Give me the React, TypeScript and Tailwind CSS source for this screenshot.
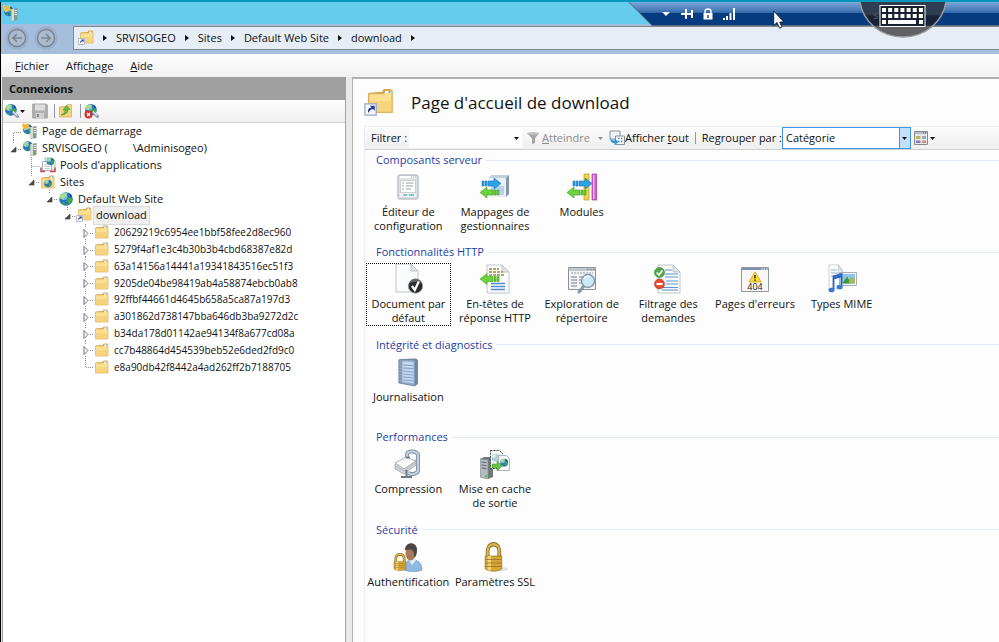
import React from "react";

type IconProps = { className?: string };

/* ---------- small shared drawings ---------- */

function FolderShape() {
  return (
    <>
      <path d="M2 3.500 8.500 3l1-1.500h4l.5 1.500v11H2z" fill="#d9a94e" />
      <path d="M1.500 4h8l1-1.500H14V14H1.500z" fill="#fbdf93" stroke="#d8ae56" strokeWidth=".7" />
      <path d="M1.500 8H14v6H1.500z" fill="#f4cc70" opacity=".6" />
      <path d="M10.500 2.600h2.600v1.200h-2.600z" fill="#fff" />
      <path d="M12 2.600h1v1.200h-1z" fill="#6fb0dc" />
    </>
  );
}

function FolderIcon({ className = "size-4" }: IconProps) {
  return (
    <svg viewBox="0 0 16 16" className={className} aria-hidden="true">
      <FolderShape />
    </svg>
  );
}

function ShortcutFolderIcon({ className = "size-4" }: IconProps) {
  return (
    <svg viewBox="0 0 16 16" className={className} aria-hidden="true">
      <g transform="translate(1 -1)">
        <FolderShape />
      </g>
      <path d="M.5 8.500h6v6h-6z" fill="#f6f8fd" stroke="#9aa7c8" strokeWidth=".7" />
      <path d="M2.200 13.300c-.3-2 .5-2.800 1.800-2.900l-.9-1h2.600v2.700l-.9-.9c-1 .1-1.600.6-2.600 2.100z" fill="#22389c" />
    </svg>
  );
}

function GlobeShape() {
  return (
    <>
      <circle cx="8" cy="8" r="6.800" fill="#2672c8" />
      <circle cx="6" cy="5.500" r="3.600" fill="#8ccaf4" opacity=".75" />
      <path d="M3 3.500c2-2 5-2.200 6.500-1L8 4l1 1.500-2.500 1L5.500 9 3.500 7.500 1.800 8C1.600 6 2 4.600 3 3.500z" fill="#a6dc8a" />
      <path d="M9 7.500l3-1 2.500 1.500c-.2 2.500-1.500 4.500-3.500 5.800L9.500 11z" fill="#3fae3b" />
      <path d="M4.500 11l2 .5.5 2.800c-1.500-.3-2.700-1.500-3.500-2.600z" fill="#3fae3b" />
      <path d="M11 2.200c1.800.9 2.900 2.300 3.300 4L12 5z" fill="#1b3f93" />
    </>
  );
}

function GlobeIcon({ className = "size-4" }: IconProps) {
  return (
    <svg viewBox="0 0 16 16" className={className} aria-hidden="true">
      <GlobeShape />
    </svg>
  );
}

function ServerGlobeIcon({ className = "size-4", star = false }: IconProps & { star?: boolean }) {
  return (
    <svg viewBox="0 0 16 16" className={className} aria-hidden="true">
      <g transform="translate(0 .5) scale(.72)">
        <GlobeShape />
      </g>
      {star && (
        <path d="M1 0l2.500 1.500L7 .3 6 3l3 2.500L5 5 2 7.500 1.800 4.500 0 3z" fill="#f6b632" stroke="#fbe08a" strokeWidth=".4" />
      )}
      <path d="M8.500 4 14.500 3v12l-6 1z" fill="#8d9690" />
      <path d="M8.500 4 11 3.500v12l-2.500.3z" fill="#d9dedb" />
      <path d="M11.500 5.500h2.500M11.500 7.500h2.500M11.500 9.500h2.500" stroke="#e9efec" />
      <path d="M12 12.500h1.500" stroke="#53c545" strokeWidth="1.500" />
    </svg>
  );
}

function PoolsIcon() {
  return (
    <svg viewBox="0 0 16 16" className="size-4" aria-hidden="true">
      <path d="M5 1h7l3 3v9H5z" fill="#eef2f8" stroke="#97a6bd" strokeWidth=".8" />
      <path d="M2.500 4.500h9v9h-9z" fill="#fff" stroke="#8e9db5" strokeWidth=".8" />
      <g transform="translate(6 0) scale(.55)">
        <GlobeShape />
      </g>
      <path d="M4.500 7.500h5M4.500 9.500h5M4.500 11.500h5" stroke="#a9b9d0" strokeWidth=".8" />
      <path d="M1 10.500v4h4M15 10.500v4h-5" fill="none" stroke="#c94848" strokeWidth="1.500" />
    </svg>
  );
}

function SitesIcon() {
  return (
    <svg viewBox="0 0 16 16" className="size-4" aria-hidden="true">
      <FolderShape />
      <g transform="translate(3.500 5) scale(.56)">
        <GlobeShape />
      </g>
    </svg>
  );
}

function Caret({ className = "" }: IconProps) {
  return (
    <svg viewBox="0 0 5 3" className={`h-[3px] w-[5px] shrink-0 ${className}`} aria-hidden="true">
      <path d="M0 0h5L2.500 3z" fill="currentColor" />
    </svg>
  );
}

/* ---------- toolbar drawings ---------- */

function ConnectIcon({ remove = false }: { remove?: boolean }) {
  return (
    <svg viewBox="0 0 16 16" className="size-4" aria-hidden="true">
      <g transform="scale(.86)">
        <GlobeShape />
      </g>
      <path d="M9.500 9.500l4 4" stroke="#8b99a8" strokeWidth="3" strokeLinecap="round" />
      <path d="M9 8.500l4 4" stroke="#e3ebf2" strokeWidth="1.200" />
      {remove && (
        <>
          <circle cx="4.500" cy="11.500" r="4" fill="#d02f2a" />
          <path d="M3 10l3 3M6 10l-3 3" stroke="#fff" strokeWidth="1.300" />
        </>
      )}
    </svg>
  );
}

function SaveIcon() {
  return (
    <svg viewBox="0 0 16 16" className="size-4" aria-hidden="true">
      <path d="M.7 1h13.600l1 1v13H.7z" fill="#b0b0b0" stroke="#969696" strokeWidth=".8" />
      <path d="M3 1.500h10v6H3z" fill="#dedede" />
      <path d="M4 10h8v5H4z" fill="#d2d2d2" />
      <path d="M5 11h2v3H5z" fill="#858585" />
    </svg>
  );
}

function UpFolderIcon() {
  return (
    <svg viewBox="0 0 16 16" className="size-4" aria-hidden="true">
      <path d="M1.500 4l7-.5 1-2h4V14h-12z" fill="#f3d27c" stroke="#d1a951" strokeWidth=".7" />
      <path d="M3 12c3-1 4-3 4-5H5l3.500-4.500L12 6.500h-2c0 3-2.500 5.500-7 5.500z" fill="#5dbd3d" stroke="#378a25" strokeWidth=".5" />
    </svg>
  );
}

function FunnelIcon() {
  return (
    <svg viewBox="0 0 14 14" className="size-3.5" aria-hidden="true">
      <path d="M1 2h12L9 7.500V12l-3 1V7.500z" fill="#a4a4a4" />
      <ellipse cx="7" cy="2.500" rx="6" ry="1.500" fill="#bfbfbf" />
    </svg>
  );
}

function ShowAllIcon() {
  return (
    <svg viewBox="0 0 16 16" className="size-4" aria-hidden="true">
      <path d="M1 1h10v8H1z" fill="#eef3f8" stroke="#7d8792" strokeWidth=".9" />
      <path d="M6.500 6h9v8.500h-9z" fill="#f7f9fc" stroke="#7d8792" strokeWidth=".9" />
      <path d="M9 8.500h1.500m1.500 0h1.500M9 11.500h1.500m1.500 0h1.500" stroke="#6484b4" strokeWidth="1.500" />
      <path d="M1.500 8c1 2 2 2.500 4 2.500V8.500L9.500 12l-4 3.200V13c-3 0-4.500-2-4-5z" fill="#2d95d8" />
    </svg>
  );
}

function ViewIcon() {
  return (
    <svg viewBox="0 0 14 14" className="size-3.5" aria-hidden="true">
      <path d="M.5.5h13v13H.5z" fill="#e9e9e9" stroke="#8a8a8a" />
      <path d="M1 2h12" stroke="#b7bcc6" strokeWidth="2" />
      <path d="M9 2h1m1 0h1" stroke="#555" />
      <path d="M2 5h4.500v3H2z" fill="#c7b25a" />
      <path d="M8 5h4v3H8z" fill="#8aa9cf" />
      <path d="M2 9.500h4.500V12H2z" fill="#8377c9" />
      <path d="M8 9.500h4V12H8z" fill="#d88f70" />
    </svg>
  );
}

/* ---------- feature drawings, 30 x 30 grid ---------- */

function Feature({ children }: { children: React.ReactNode }) {
  return (
    <svg viewBox="0 0 30 30" className="size-[30px]" aria-hidden="true">
      {children}
    </svg>
  );
}

const BLUE_ARROW = "M0 3h2v5H0zM3 3h2v5H3zM6 3h6V0l7 5.500-7 5.500V8H6z";
const GREEN_ARROW = "M19 3h-2v5h2zM16 3h-2v5h2zM13 3H7V0L0 5.500 7 11V8h6z";

function ConfigEditor() {
  return (
    <Feature>
      <rect x="5" y="3" width="20" height="24" rx="1.500" fill="#dfe3e6" stroke="#a4abb1" />
      <path d="M7 5h16" stroke="#fff" strokeWidth="2" />
      <path d="M18 5h1m1 0h1m1 0h1" stroke="#8e979e" />
      <path d="M7.500 8.500h15v12h-15z" fill="#fff" stroke="#bbc1c5" strokeWidth=".7" />
      <path d="M9 11h2m2 0h7M9 14h2m2 0h7M9 17h2m2 0h5" stroke="#98a1a7" />
      <path d="M7.500 21.500h15v3h-15z" fill="#fff" />
      <path d="M10 23h4m2 0h5" stroke="#45b1dd" strokeWidth="1.500" />
    </Feature>
  );
}

function HandlerMappings() {
  return (
    <Feature>
      <path d="M9 6l3-3h17v19l-3 3H9z" fill="#8597ad" />
      <path d="M9 6h17v19H9z" fill="#e9f0f8" />
      <path d="M9 6l3-3h17l-3 3z" fill="#c3cfde" />
      <path d="M11 14h13v9H11z" fill="#b9d0ea" />
      <path d={BLUE_ARROW} transform="translate(2 6)" fill="#2ea3e4" stroke="#1773b8" strokeWidth=".6" />
      <path d={GREEN_ARROW} transform="translate(0 15)" fill="#6fd13d" stroke="#3e9e21" strokeWidth=".6" />
    </Feature>
  );
}

function ModulesIcon() {
  return (
    <Feature>
      <path d="M17 2h5v26h-5z" fill="#f0d445" stroke="#b59a27" strokeWidth=".7" />
      <path d="M25 2h5v26h-5z" fill="#cb63cd" stroke="#9b3ba0" strokeWidth=".7" />
      <path d="M26 3h1.500v24H26z" fill="#eda8ea" />
      <path d={BLUE_ARROW} transform="translate(6 6)" fill="#2ea3e4" stroke="#1773b8" strokeWidth=".6" />
      <path d={GREEN_ARROW} transform="translate(0 15)" fill="#6fd13d" stroke="#3e9e21" strokeWidth=".6" />
    </Feature>
  );
}

function Sheet({ x = 4, y = 1 }: { x?: number; y?: number }) {
  return (
    <g transform={`translate(${x} ${y})`}>
      <path d="M0 0h15l7 7v21H0z" fill="#fafbfc" stroke="#b9bec4" strokeWidth=".9" />
      <path d="M15 0v7h7z" fill="#dfe3e7" stroke="#b9bec4" strokeWidth=".9" />
    </g>
  );
}

function DefaultDocument() {
  return (
    <Feature>
      <Sheet x={3} y={0} />
      <circle cx="22.500" cy="22" r="7.200" fill="#2b2b2b" stroke="#999" strokeWidth=".7" />
      <path d="M16.500 19a6.500 6.500 0 0 1 12 0c-4-1.500-8-1-12 0z" fill="#777" opacity=".7" />
      <path d="M19 22l2.800 4 4-8.500" fill="none" stroke="#fff" strokeWidth="2.200" />
    </Feature>
  );
}

function HttpHeaders() {
  return (
    <Feature>
      <Sheet x={7} y={1} />
      <path d="M9 5h10M9 8h14M9 11h16" stroke="#a28a35" strokeWidth="1.600" strokeDasharray="3 1" />
      <path d={GREEN_ARROW} transform="translate(0 9.500)" fill="#6fd13d" stroke="#3e9e21" strokeWidth=".6" />
      <path d="M11 19.500h14M11 22.500h14M11 25.500h14" stroke="#4f8bd0" strokeWidth="1.300" />
    </Feature>
  );
}

function DirectoryBrowsing() {
  return (
    <Feature>
      <path d="M1.500 3.500h27v22h-27z" fill="#f3f4f5" stroke="#8b9196" />
      <path d="M2 4h26v3H2z" fill="#c1c6cb" />
      <path d="M20 5.500h1.500m1.500 0h1.500m1.500 0h1.500" stroke="#777" />
      <path d="M4 9h22" stroke="#999" strokeDasharray="2 1" />
      <path d="M4 13h6m2 0h6M4 16h6m2 0h6M4 19h6m2 0h4M4 22h6" stroke="#787e84" strokeWidth="1.200" />
      <path d="M17 22l-5 6" stroke="#8997a6" strokeWidth="3" strokeLinecap="round" />
      <circle cx="21" cy="17" r="6.500" fill="#cce7f8" stroke="#8797a7" strokeWidth="1.400" />
      <path d="M17 15a5 5 0 0 1 6-2.500" stroke="#fff" strokeWidth="1.500" fill="none" />
    </Feature>
  );
}

function RequestFiltering() {
  return (
    <Feature>
      <Sheet x={5} y={1} />
      <path d="M12 6h7M12 10h13M12 13h13M13 17h12M13 20h12M9 23.500h16M9 26h16" stroke="#5a94d2" strokeWidth="1.200" />
      <circle cx="6.500" cy="8.500" r="5" fill="#51a84c" stroke="#337d32" strokeWidth=".6" />
      <path d="M3.700 8.500l2.200 2.500 3.500-4.500" fill="none" stroke="#fff" strokeWidth="1.600" />
      <circle cx="6.500" cy="20" r="5" fill="#e34b2e" stroke="#a92b18" strokeWidth=".6" />
      <path d="M3.500 20h6" stroke="#fff" strokeWidth="2.200" />
    </Feature>
  );
}

function ErrorPages() {
  return (
    <Feature>
      <path d="M1.500 3.500h27v24h-27z" fill="#f7f7f7" stroke="#8e99a4" />
      <path d="M2 4h26v2H2z" fill="#7e92ab" />
      <path d="M21 5h1.500m1 0h1.500m1 0h1.500" stroke="#fff" />
      <path d="M15 8l6 10H9z" fill="#ffdc29" stroke="#d6a818" strokeWidth=".9" strokeLinejoin="round" />
      <path d="M15 11v3.500m0 1v1.500" stroke="#333" strokeWidth="1.500" />
      <text x="15" y="26" textAnchor="middle" fontSize="9" fill="#222" fontFamily="Open Sans, sans-serif">404</text>
    </Feature>
  );
}

function MimeTypes() {
  return (
    <Feature>
      <g transform="translate(2 0) scale(.62 .85)">
        <Sheet x={0} y={1} />
      </g>
      <path d="M4 6h6M4 9h8M4 12h8" stroke="#9bb4cf" />
      <path d="M12.500 8.500h17v13h-17z" fill="#f5f7fa" stroke="#a5b0bc" />
      <path d="M14.500 10h13.500v9.500H14.500z" fill="#8cc4ef" />
      <path d="M15.500 19.500l4.500-7 4 7z" fill="#3b9a35" />
      <path d="M22 15l3-2 3 2.500v4h-6z" fill="#a9b45f" />
      <path d="M6.500 25V12.500l8-2.500V22" fill="none" stroke="#2863bd" strokeWidth="1.800" />
      <path d="M6.500 14.500l8-2.500" stroke="#2863bd" strokeWidth="2" />
      <ellipse cx="4.500" cy="26" rx="3" ry="2.300" fill="#3b7bd6" />
      <ellipse cx="12.500" cy="23" rx="3" ry="2.300" fill="#3b7bd6" />
    </Feature>
  );
}

function LoggingIcon() {
  return (
    <Feature>
      <path d="M8 2l15-.5L25 3v24l-3 2L6 26z" fill="#77879d" />
      <path d="M6 2.500l16 .5v26L6 26z" fill="#93abcb" stroke="#6d87aa" strokeWidth=".8" />
      <path d="M9.500 4.500l11 .5v21.500l-11-2z" fill="#c3d9f2" />
      <path d="M10 8l10 .5M10 11l10 .5M10 14l10 1M10 17l10 1M10 20l10 1M10 23l10 1" stroke="#7998c0" strokeWidth=".9" />
      <path d="M5 4h4M5 7h4M5 10h4M5 13h4M5 16h4M5 19h4M5 22h4M5 25h4" stroke="#808791" strokeWidth="1.200" />
    </Feature>
  );
}

function CompressionIcon() {
  return (
    <Feature>
      <path d="M14 9V5c1-3.500 10-3.500 11 1v15c0 4-6 5-10 3" fill="none" stroke="#7f90a3" strokeWidth="4" />
      <path d="M2 15v5l9 5 12-9v-5z" fill="#d3d6d9" stroke="#9b9fa4" strokeWidth=".7" />
      <path d="M2 14l11-6 10 4-12 8z" fill="#f9f9f9" stroke="#9b9fa4" strokeWidth=".8" />
      <path d="M2 17l9 5 12-8" fill="none" stroke="#a5aab0" strokeWidth=".7" />
      <path d="M14 10V5c1-3.500 10-3.500 11 1v15c0 4-6 5-10 3" fill="none" stroke="#c4d0dc" strokeWidth="2.200" />
      <path d="M13 8.500h4" stroke="#657485" strokeWidth="1.500" />
      <path d="M13.500 21v7M8 28h11" stroke="#6d7882" strokeWidth="2" />
    </Feature>
  );
}

function OutputCaching() {
  return (
    <Feature>
      <path d="M0 10l4-2h9v20l-5 2-8-2z" fill="#70777e" />
      <path d="M0 10l8 1v19l-8-2z" fill="#b5bbc1" stroke="#838a91" strokeWidth=".6" />
      <path d="M1.500 13l5 .7M1.500 16l5 .7M1.500 19l5 .7" stroke="#5f666d" />
      <path d="M5 27h2" stroke="#52c73d" strokeWidth="2" />
      <path d="M10.500 1.500h9l3 3v15h-12z" fill="#fff" stroke="#444" strokeDasharray="2 1" />
      <g transform="translate(11 4) scale(.58)" opacity=".4">
        <GlobeShape />
      </g>
      <path d="M18.500 6.500h8l3 3v12h-11z" fill="#f9fafb" stroke="#b0b6bc" />
      <g transform="translate(19.500 9) scale(.58)">
        <GlobeShape />
      </g>
      <path d="M12 15h5v-3l5 5-5 5v-3h-5z" fill="#67c344" stroke="#3e9425" strokeWidth=".5" />
    </Feature>
  );
}

function Padlock() {
  return (
    <>
      <path d="M8 15V9c0-9 14-9 14 0v6" fill="none" stroke="#8c6820" strokeWidth="4.500" />
      <path d="M8 15V9c0-9 14-9 14 0v6" fill="none" stroke="#d9b553" strokeWidth="2.500" />
      <path d="M5 14h20v13c-5 3-15 3-20 0z" fill="#d7a634" stroke="#92701f" strokeWidth=".7" />
      <path d="M8 14h4v14.500H8z" fill="#fbe9a0" opacity=".7" />
      <path d="M5 17.500h20M5 21h20M5 24.500h20" stroke="#9c7622" strokeWidth=".9" />
    </>
  );
}

function AuthenticationIcon() {
  return (
    <Feature>
      <path d="M11 28c0-8 4-10 9-10s9 3 9 10c-4 2-13 2-18 0z" fill="#8fb9e2" stroke="#5f8dbf" strokeWidth=".6" />
      <path d="M16 18l3 5 4-5z" fill="#e8f1f9" />
      <ellipse cx="17.500" cy="11" rx="5" ry="7.500" fill="#a8795a" />
      <path d="M12 8c0-9 12-9 12-.5 0 4-.5 6-2.500 8.500 0-4-1-8-3.500-8.500z" fill="#4a4544" />
      <g transform="translate(-2 11) scale(.6)">
        <Padlock />
      </g>
    </Feature>
  );
}

function SslIcon() {
  return (
    <Feature>
      <ellipse cx="20" cy="27" rx="8" ry="2" fill="#e2e2e2" />
      <g transform="translate(-1 0) scale(.98 1)">
        <g transform="translate(2 0) scale(.85 1)">
          <Padlock />
        </g>
      </g>
    </Feature>
  );
}

/* ---------- window frame ---------- */

function ConnectionBar() {
  return (
    <div className="absolute top-0.5 right-0 left-[628px] flex h-6 items-center bg-[#5d6b7c] pb-px [clip-path:polygon(0_0,100%_0,100%_100%,24px_100%)]">
      <div className="flex h-full w-full items-center gap-[9px] bg-linear-to-b from-[#7ba8d8] from-0% via-[#3a6fb0] via-45% to-[#073b80] to-50% pl-8 text-white [clip-path:polygon(1px_0,100%_0,100%_100%,24px_100%)]">
        <button aria-label="Options de connexion" className="flex size-3 items-center justify-center">
          <svg viewBox="0 0 8 4" className="h-1 w-2"><path d="M0 0h8L4 4z" fill="currentColor" /></svg>
        </button>
        <button aria-label="Épingler" className="flex size-3 items-center justify-center">
          <svg viewBox="0 0 12 10" className="h-2.5 w-3" stroke="currentColor" strokeWidth="2" fill="none">
            <path d="M0 5h5M5 0v10M11 1v8M5 5h6" />
          </svg>
        </button>
        <button aria-label="Sécurité de la connexion" className="flex size-3 items-center justify-center">
          <svg viewBox="0 0 10 12" className="h-3 w-2.5">
            <path d="M2 6V3.500c0-3.500 6-3.500 6 0V6" stroke="currentColor" strokeWidth="1.500" fill="none" />
            <path d="M.5 5h9v6.500h-9z" fill="currentColor" />
            <path d="M5 7v3" stroke="#174b8c" strokeWidth="1.500" />
          </svg>
        </button>
        <button aria-label="Qualité de la connexion" className="flex size-3 items-center justify-center">
          <svg viewBox="0 0 12 12" className="size-3" stroke="currentColor" strokeWidth="2">
            <path d="M1 12v-2M4 12V8M7.500 12V5M11 12V0" />
          </svg>
        </button>
      </div>
    </div>
  );
}

function KeyboardButton() {
  return (
    <button aria-label="Clavier" className="absolute top-0.5 right-[52px] h-9 w-[88px]">
      <svg viewBox="0 0 88 36" className="h-9 w-[88px]" aria-hidden="true">
        <defs>
          <linearGradient id="pad" x1="0" y1="0" x2="0" y2="1">
            <stop offset=".35" stopColor="#2f3d50" />
            <stop offset=".4" stopColor="#172438" />
            <stop offset=".66" stopColor="#172438" />
            <stop offset=".7" stopColor="#5f6164" />
          </linearGradient>
        </defs>
        <path d="M1 0C4 20 22 35 44 35S84 20 87 0z" fill="url(#pad)" />
        <path d="M1 0C4 20 22 35 44 35S84 20 87 0" fill="none" stroke="#999da2" strokeWidth="1.500" />
        <text x="14" y="17" fontSize="11" fill="#5a5d62" fontFamily="Open Sans, sans-serif">s</text>
        <rect x="21" y="3.500" width="45" height="21" fill="#17202c" stroke="#fff" />
        <path d="M23 8h41M23 14h41" stroke="#fff" strokeWidth="4" strokeDasharray="4 2.150" />
        <path d="M23 20h4M29 20h28M60 20h4" stroke="#fff" strokeWidth="4" />
      </svg>
    </button>
  );
}

function MousePointer() {
  return (
    <svg viewBox="0 0 12 19" className="pointer-events-none absolute top-2.5 left-[773px] h-[19px] w-3" aria-hidden="true">
      <path d="M.7 1v14.500l3.300-3 2.500 5.700 2.500-1.200-2.300-5H11z" fill="#fff" stroke="#111a2c" strokeWidth=".9" />
    </svg>
  );
}

function Crumb({ children }: { children: React.ReactNode }) {
  return (
    <>
      <svg viewBox="0 0 4 6" className="h-1.5 w-1 shrink-0" aria-hidden="true"><path d="M0 0l4 3-4 3z" fill="#111" /></svg>
      {children && <button className="whitespace-nowrap">{children}</button>}
    </>
  );
}

function AddressBar() {
  return (
    <div className="flex h-[30px] bg-[#a5bedc] pt-0.5 pb-1">
      <div className="flex w-[72px] shrink-0 items-center gap-[5px] pl-1 text-[#7d858f]">
        {["M13 8H4m4-4L4 8l4 4", "M3 8h9M8 4l4 4-4 4"].map((d, i) => (
          <button key={d} aria-label={i ? "Suivant" : "Précédent"} className="flex size-6 items-center justify-center">
            <svg viewBox="0 0 24 24" className="size-6">
              <circle cx="12" cy="12" r="11.500" fill="#98b0cd" />
              <circle cx="12" cy="12" r="8.500" fill="#a9bbd1" stroke="currentColor" strokeWidth="1.400" />
              <path d={d} transform="translate(4 4)" fill="none" stroke="currentColor" strokeWidth="1.700" />
            </svg>
          </button>
        ))}
      </div>
      <nav aria-label="Emplacement" className="flex min-w-0 flex-1 items-center gap-[9px] border border-r-0 border-[#808890] bg-[#e6edf5] pl-1">
        <ShortcutFolderIcon className="size-4 shrink-0" />
        <Crumb>SRVISOGEO</Crumb>
        <Crumb>Sites</Crumb>
        <Crumb>Default Web Site</Crumb>
        <Crumb>download</Crumb>
        <Crumb>{null}</Crumb>
      </nav>
    </div>
  );
}

/* ---------- connections tree ---------- */

type Line = "start" | "through" | "end" | "open" | "closed";
type Node = { id: string; label: React.ReactNode; depth: number; line: Line; icon: React.ReactNode; selected?: boolean };

const INDENT = ["pl-px", "pl-[19px]", "pl-[37px]", "pl-[55px]", "pl-[73px]"];

const FOLDERS = [
  "20629219c6954ee1bbf58fee2d8ec960",
  "5279f4af1e3c4b30b3b4cbd68387e82d",
  "63a14156a14441a19341843516ec51f3",
  "9205de04be98419ab4a58874ebcb0ab8",
  "92ffbf44661d4645b658a5ca87a197d3",
  "a301862d738147bba646db3ba9272d2c",
  "b34da178d01142ae94134f8a677cd08a",
  "cc7b48864d454539beb52e6ded2fd9c0",
  "e8a90db42f8442a4ad262ff2b7188705",
];

const NODES: Node[] = [
  { id: "start", label: "Page de démarrage", depth: 0, line: "start", icon: <ServerGlobeIcon star /> },
  {
    id: "server",
    label: (
      <>
        SRVISOGEO (<span className="inline-block w-[25px]" />\Adminisogeo)
      </>
    ),
    depth: 0,
    line: "open",
    icon: <ServerGlobeIcon />,
  },
  { id: "pools", label: "Pools d'applications", depth: 1, line: "through", icon: <PoolsIcon /> },
  { id: "sites", label: "Sites", depth: 1, line: "open", icon: <SitesIcon /> },
  { id: "web", label: "Default Web Site", depth: 2, line: "open", icon: <GlobeIcon /> },
  { id: "download", label: "download", depth: 3, line: "open", icon: <ShortcutFolderIcon />, selected: true },
  ...FOLDERS.map((name, i): Node => ({
    id: name,
    label: name,
    depth: 4,
    line: i === FOLDERS.length - 1 ? "end" : "closed",
    icon: <FolderIcon />,
  })),
];

const LINE_PATH: Record<Line, string> = {
  start: "M9.500 17V9.500H18",
  through: "M9.500 0v17M9.500 9.500H18",
  end: "M9.500 0v9.500H18",
  open: "M9.500 0v3M14 9.500h4",
  closed: "M9.500 0v3M9.500 15v2M14 9.500h4",
};

function TreeGuide({ line }: { line: Line }) {
  return (
    <svg viewBox="0 0 18 17" className="h-[17px] w-[18px]" fill="none" aria-hidden="true">
      <path d={LINE_PATH[line]} stroke="#909090" strokeDasharray="1 1" />
      {line === "open" && <path d="M12 7v5H7z" fill="#505050" stroke="#303030" strokeWidth=".6" />}
      {line === "closed" && <path d="M8 5.500l4 4-4 4z" fill="#fff" stroke="#707070" />}
    </svg>
  );
}

function TreeRow({ node }: { node: Node }) {
  return (
    <li className={`flex min-h-0 items-center ${INDENT[node.depth]}`}>
      {node.line === "open" || node.line === "closed" ? (
        <button aria-label="Développer ou réduire"><TreeGuide line={node.line} /></button>
      ) : (
        <TreeGuide line={node.line} />
      )}
      <span className="flex w-[18px] shrink-0">{node.icon}</span>
      <button
        className={`h-full px-0.5 text-left whitespace-nowrap ${
          node.selected ? "bg-[#efefef] outline outline-[#dadada]" : ""
        } ${node.depth === 4 ? "text-[10px]" : ""}`}
      >
        {node.label}
      </button>
    </li>
  );
}

function Connections() {
  return (
    <aside className="flex w-[344px] shrink-0 flex-col border-r border-l border-[#a0a0a0] bg-white">
      <h2 className="flex h-[23px] items-center bg-[#a0a0a0] pl-1.5 font-bold text-[#111]">Connexions</h2>
      <div className="flex h-[23px] items-center border-b border-[#d5d5d5] bg-linear-to-b from-[#fdfdfd] to-[#f0f0f0] pl-px">
        <button aria-label="Se connecter" className="flex items-center"><ConnectIcon /><Caret /></button>
        <button aria-label="Enregistrer" className="ml-[7px]"><SaveIcon /></button>
        <span className="mr-[3px] ml-1.5 h-3.5 w-px bg-[#999]" />
        <button aria-label="Dossier parent"><UpFolderIcon /></button>
        <span className="mr-[3px] ml-1.5 h-3.5 w-px bg-[#999]" />
        <button aria-label="Supprimer la connexion"><ConnectIcon remove /></button>
      </div>
      <ul className="grid h-[252px] grid-rows-[repeat(15,minmax(0,1fr))] leading-4">
        {NODES.map((n) => (
          <TreeRow key={n.id} node={n} />
        ))}
      </ul>
    </aside>
  );
}

/* ---------- features view ---------- */

type Item = { lines: string[]; icon: React.ReactNode; focused?: boolean };

const SECTIONS: { title: string; items: Item[] }[] = [
  {
    title: "Composants serveur",
    items: [
      { lines: ["Éditeur de", "configuration"], icon: <ConfigEditor /> },
      { lines: ["Mappages de", "gestionnaires"], icon: <HandlerMappings /> },
      { lines: ["Modules"], icon: <ModulesIcon /> },
    ],
  },
  {
    title: "Fonctionnalités HTTP",
    items: [
      { lines: ["Document par", "défaut"], icon: <DefaultDocument />, focused: true },
      { lines: ["En-têtes de", "réponse HTTP"], icon: <HttpHeaders /> },
      { lines: ["Exploration de", "répertoire"], icon: <DirectoryBrowsing /> },
      { lines: ["Filtrage des", "demandes"], icon: <RequestFiltering /> },
      { lines: ["Pages d'erreurs"], icon: <ErrorPages /> },
      { lines: ["Types MIME"], icon: <MimeTypes /> },
    ],
  },
  { title: "Intégrité et diagnostics", items: [{ lines: ["Journalisation"], icon: <LoggingIcon /> }] },
  {
    title: "Performances",
    items: [
      { lines: ["Compression"], icon: <CompressionIcon /> },
      { lines: ["Mise en cache", "de sortie"], icon: <OutputCaching /> },
    ],
  },
  {
    title: "Sécurité",
    items: [
      { lines: ["Authentification"], icon: <AuthenticationIcon /> },
      { lines: ["Paramètres SSL"], icon: <SslIcon /> },
    ],
  },
];

function FeatureSection({ title, items }: { title: string; items: Item[] }) {
  return (
    <section className="min-h-0">
      <h2 className="flex h-4 items-center gap-1 pl-[11px] whitespace-nowrap text-[#1f3fa6]">
        {title}
        <span className="h-px flex-1 bg-[#e2e9f3]" />
      </h2>
      <div className="grid w-[520px] grid-cols-6 pt-[3px]">
        {items.map((item) => (
          <button
            key={item.lines[0]}
            className={`mx-px flex h-[63px] flex-col items-center border border-dotted leading-[14px] whitespace-nowrap ${
              item.focused ? "border-black" : "border-transparent"
            }`}
          >
            {item.icon}
            <span className="mt-[3px] flex flex-col">
              {item.lines.map((l) => (
                <span key={l}>{l}</span>
              ))}
            </span>
          </button>
        ))}
      </div>
    </section>
  );
}

function FilterBar() {
  return (
    <div className="flex h-6 items-center border-y border-t-[#ececec] border-b-[#cfcfcf] bg-linear-to-b from-[#fcfcfc] to-[#efefef] pl-1.5 whitespace-nowrap">
      <label htmlFor="filter" className="w-[38px] shrink-0">Filtrer :</label>
      <input id="filter" className="h-5 w-[101px] shrink-0 bg-white px-1 outline-none" />
      <button aria-label="Filtres récents" className="flex h-5 w-3 items-center justify-center bg-white"><Caret /></button>
      <button className="ml-1 flex items-center gap-0.5 text-[#8d8d8d]">
        <FunnelIcon />
        <span><u>A</u>tteindre</span>
      </button>
      <button aria-label="Options de filtre" className="mr-1.5 ml-2 text-[#8d8d8d]"><Caret /></button>
      <button className="flex items-center">
        <ShowAllIcon />
        <span>Afficher <u>t</u>out</span>
      </button>
      <span className="mx-1.5 h-3 w-px bg-[#999]" />
      <label htmlFor="group">Regrouper par :</label>
      <div className="flex h-[22px] w-[129px] shrink-0 border border-[#3f97ea] bg-white">
        <select id="group" className="min-w-0 flex-1 appearance-none pl-[3px] outline-none">
          <option>Catégorie</option>
        </select>
        <span className="flex w-[11px] items-center justify-center border-l border-[#3f97ea] bg-[#c4dffb]"><Caret /></span>
      </div>
      <button aria-label="Affichage" className="ml-[3px] flex items-center gap-0.5"><ViewIcon /><Caret /></button>
    </div>
  );
}

export default function App() {
  return (
    <div className="relative flex min-h-screen flex-col overflow-hidden border-t-2 border-[#0099bc] bg-[#e9e9e9] font-['Open_Sans','Noto_Sans',sans-serif] text-[11px] leading-4 text-[#111]">
      <div className="flex flex-1 flex-col border-l border-black">
        <header>
          <div className="flex h-[22px] items-center bg-[#66ccee] pl-0.5">
            <ServerGlobeIcon star />
          </div>
          <AddressBar />
          <div className="flex h-[23px] items-center gap-[17px] bg-linear-to-b from-[#fefefe] to-[#f1f1f1] pl-3.5">
            <button><u>F</u>ichier</button>
            <button>Affic<u>h</u>age</button>
            <button><u>A</u>ide</button>
          </div>
        </header>
        <div className="flex flex-1 gap-1.5 pl-px">
          <Connections />
          <main className="flex min-w-0 flex-1 flex-col border-t-2 border-l border-[#b0b0b0] bg-[#fdfdfd] pl-[11px]">
            <div className="flex h-[47px] items-center gap-[17px]">
              <ShortcutFolderIcon className="size-[30px] shrink-0" />
              <h1 className="text-[17px] leading-6">Page d'accueil de download</h1>
            </div>
            <div className="flex-1 border-l border-[#e8edf3]">
              <FilterBar />
              <div className="grid h-[464px] grid-rows-5 pt-0.5">
                {SECTIONS.map((s) => (
                  <FeatureSection key={s.title} {...s} />
                ))}
              </div>
            </div>
          </main>
        </div>
      </div>
      <div className="absolute inset-x-0 -top-0.5 h-10">
        <ConnectionBar />
        <KeyboardButton />
        <MousePointer />
      </div>
    </div>
  );
}
